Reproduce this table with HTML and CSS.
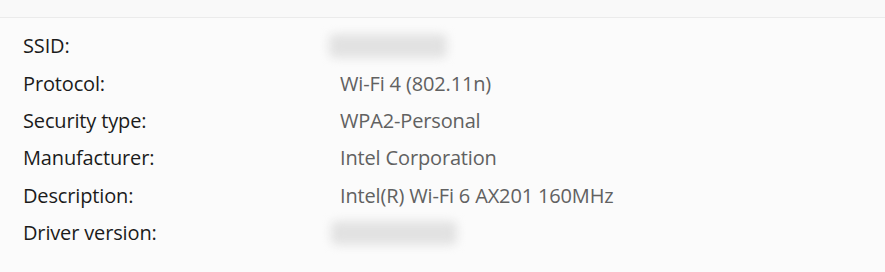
FILE: index.html
```html
<!DOCTYPE html>
<html lang="en">
<head>
    <meta charset="UTF-8">
    <title>Network properties</title>
    <link rel="stylesheet" href="styles.css">
</head>
<body>
    <div class="top-strip"></div>
    <div class="props">
        <div class="row">
            <span class="label">SSID:</span>
            <span class="value"><span class="redacted ssid"></span></span>
        </div>
        <div class="row">
            <span class="label">Protocol:</span>
            <span class="value">Wi-Fi 4 (802.11n)</span>
        </div>
        <div class="row">
            <span class="label">Security type:</span>
            <span class="value">WPA2-Personal</span>
        </div>
        <div class="row">
            <span class="label">Manufacturer:</span>
            <span class="value">Intel Corporation</span>
        </div>
        <div class="row">
            <span class="label">Description:</span>
            <span class="value">Intel(R) Wi-Fi 6 AX201 160MHz</span>
        </div>
        <div class="row">
            <span class="label">Driver version:</span>
            <span class="value"><span class="redacted driver"></span></span>
        </div>
    </div>
</body>
</html>
```

FILE: styles.css
```css
* {
    margin: 0;
    padding: 0;
    box-sizing: border-box;
}

body {
    font-family: 'Open Sans', sans-serif;
    background-color: #fbfbfb;
    color: #1b1b1b;
    width: 885px;
    height: 272px;
    overflow: hidden;
}

.top-strip {
    height: 18px;
    background-color: #f9f9f9;
    border-bottom: 1px solid #ebebeb;
}

.props {
    display: flex;
    flex-direction: column;
    padding: 9px 0 0 23px;
}

.row {
    display: flex;
    align-items: center;
    height: 37.4px;
    font-size: 20px;
    letter-spacing: -0.15px;
}

.label {
    width: 317px;
    color: #1b1b1b;
}

.value {
    color: #616161;
}

.redacted {
    display: block;
    height: 24px;
    background-color: #e2e2e2;
    border-radius: 6px;
    filter: blur(5px);
}

.ssid {
    width: 118px;
    margin-left: -11px;
}

.driver {
    width: 126px;
    margin-left: -9px;
}
```
